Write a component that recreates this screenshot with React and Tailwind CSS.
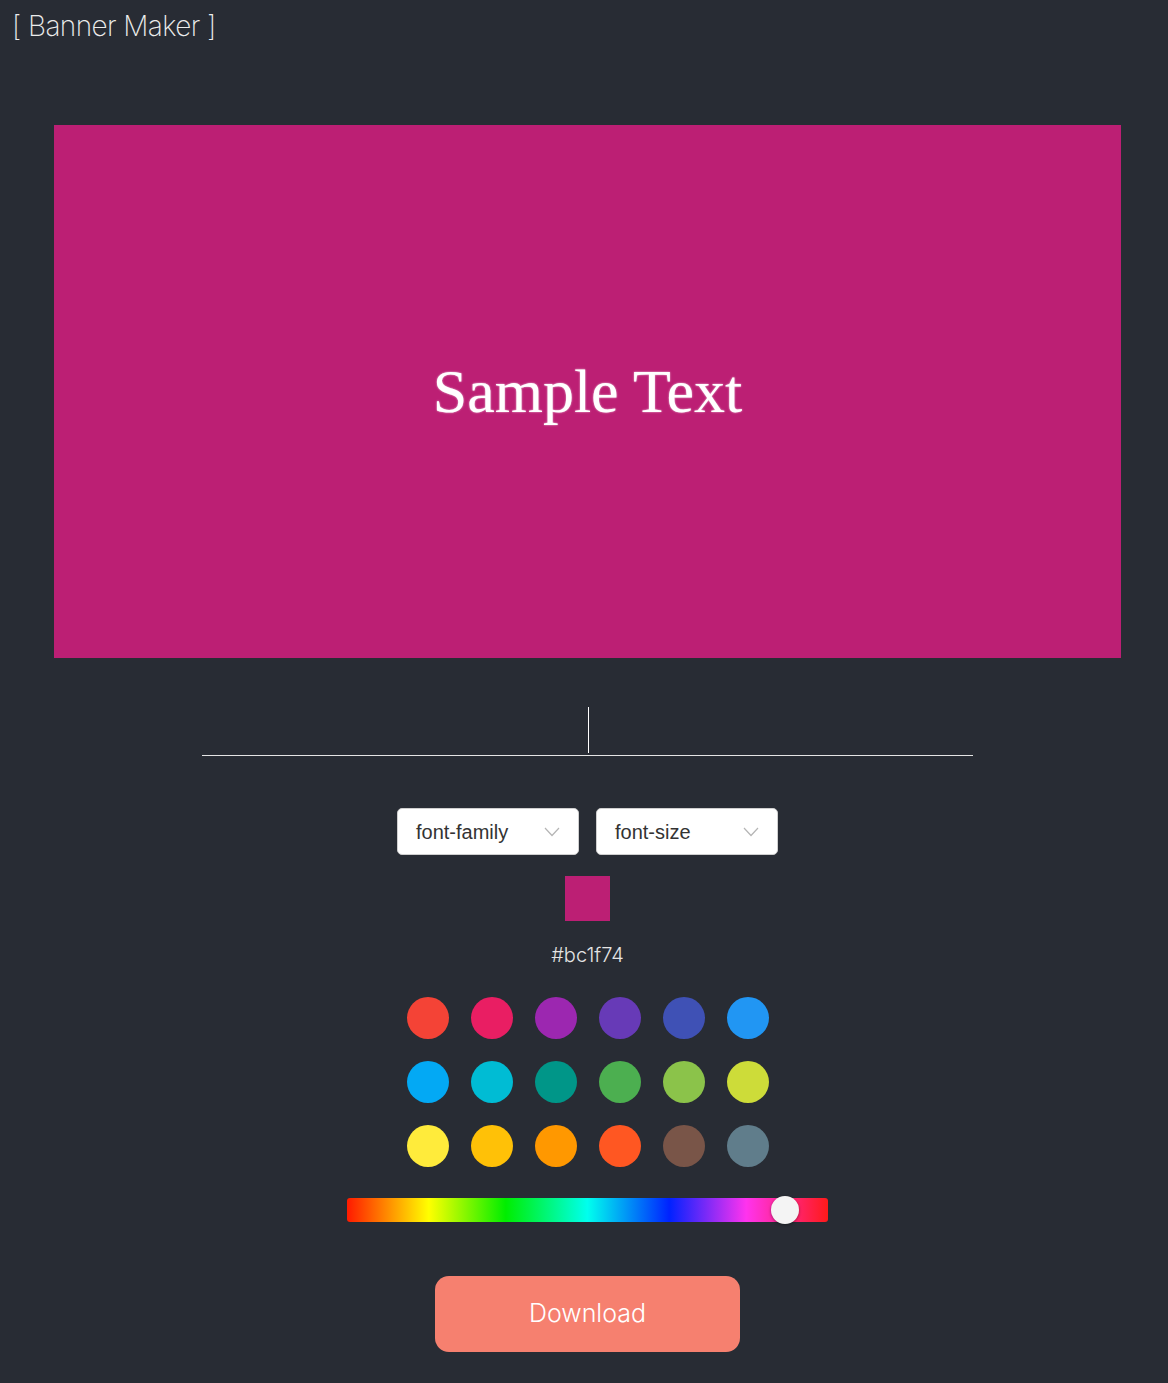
import { useState } from "react";

const SWATCHES = [
  "#f44336", "#e91e63", "#9c27b0", "#673ab7", "#3f51b5", "#2196f3",
  "#03a9f4", "#00bcd4", "#009688", "#4caf50", "#8bc34a", "#cddc39",
  "#ffeb3b", "#ffc107", "#ff9800", "#ff5722", "#795548", "#607d8b",
];

function Chevron() {
  return (
    <svg width="16" height="10" viewBox="0 0 16 10" fill="none">
      <polyline points="1,1 8,8.5 15,1" stroke="#b5b5b5" strokeWidth="1.2" />
    </svg>
  );
}

function SelectBox({ label }) {
  return (
    <div className="w-[182px] h-[47px] bg-white rounded-[5px] border border-[#cfcfcf] flex items-center justify-between pl-[18px] pr-[18px]">
      <span className="text-[20px] text-[#333] font-['Liberation_Sans',Arial,sans-serif]">
        {label}
      </span>
      <Chevron />
    </div>
  );
}

export default function App() {
  const [color] = useState("#bc1f74");
  const [text, setText] = useState("");
  const hue = 0.91;

  return (
    <div className="min-h-[1383px] bg-[#282c34] text-white font-['Inter',sans-serif]">
      <h1 className="pl-[12px] pt-[9px] text-[28px] font-extralight tracking-[-0.6px] text-[#ececec] leading-[34px]">
        [ Banner Maker ]
      </h1>

      <div className="pl-[7px] flex flex-col items-center">
        {/* Banner preview */}
        <div
          className="mt-[82px] w-[1067px] h-[533px] flex items-center justify-center"
          style={{ backgroundColor: color }}
        >
          <span className="text-[62px] text-white font-['Liberation_Serif','Times_New_Roman',serif] [text-shadow:0_0_2px_rgba(255,255,255,0.8)]">
            Sample Text
          </span>
        </div>

        {/* Text input */}
        <div className="relative mt-[48px] w-[771px]">
          <input
            value={text}
            onChange={(e) => setText(e.target.value)}
            className="w-full h-[50px] bg-transparent border-b border-[#e5e5e5] text-center text-[20px] text-white outline-none"
          />
          <div className="absolute left-[386px] top-[1px] w-px h-[46px] bg-white" />
        </div>

        {/* Font selects */}
        <div className="mt-[52px] flex gap-[17px]">
          <SelectBox label="font-family" />
          <SelectBox label="font-size" />
        </div>

        {/* Current colour */}
        <div className="mt-[21px] w-[45px] h-[45px]" style={{ backgroundColor: color }} />
        <div className="mt-[20px] text-[20px] font-light text-[#e4e4e4] leading-[28px]">{color}</div>

        {/* Swatches */}
        <div className="mt-[28px] grid grid-cols-6 gap-[22px]">
          {SWATCHES.map((c) => (
            <div key={c} className="w-[42px] h-[42px] rounded-full" style={{ backgroundColor: c }} />
          ))}
        </div>

        {/* Hue slider */}
        <div className="relative mt-[31px] w-[481px] h-[24px] rounded-[3px] bg-[linear-gradient(to_right,#ff1a00_0%,#ffff00_17%,#00ee00_33%,#00ffee_50%,#0022ff_67%,#ff33ee_83%,#ff1a1a_100%)]">
          <div
            className="absolute top-[-2px] w-[28px] h-[28px] -ml-[14px] rounded-full bg-[#f4f4f4] shadow-[0_1px_3px_rgba(0,0,0,0.4)]"
            style={{ left: `${hue * 100}%` }}
          />
        </div>

        {/* Download */}
        <button className="mt-[54px] w-[305px] h-[76px] rounded-[14px] bg-[#f6806f] text-white text-[25px] font-light">
          Download
        </button>
      </div>
    </div>
  );
}
